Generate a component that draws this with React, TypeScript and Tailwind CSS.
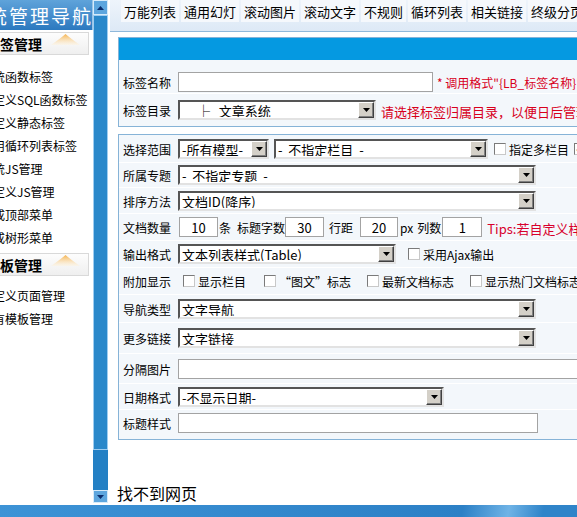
import clsx from 'clsx'

const tabs = ['万能列表', '通用幻灯', '滚动图片', '滚动文字', '不规则', '循环列表', '相关链接', '终级分页']

const tagItems = ['系统函数标签', '自定义SQL函数标签', '自定义静态标签', '通用循环列表标签', '系统JS管理', '自定义JS管理', '生成顶部菜单', '生成树形菜单']
const tplItems = ['自定义页面管理', '所有模板管理']

function Arrow({ up }: { up?: boolean }) {
  return (
    <svg width="7" height="4" viewBox="0 0 7 4">
      <path d={up ? 'M3.5 0L7 4H0z' : 'M0 0h7L3.5 4z'} fill="currentColor" />
    </svg>
  )
}

function Sel({ w, text, className, pad = 'pl-[2px]' }: { w: string; text: string; className?: string; pad?: string }) {
  return (
    <div
      className={clsx(
        'flex h-[20px] shrink-0 items-center border-2 border-t-[#555] border-l-[#555] border-r-[#e2e2e2] border-b-[#e2e2e2] bg-white',
        w,
        className,
      )}
    >
      <span className={clsx('flex-1 overflow-hidden whitespace-pre pt-[1px] text-[13px] leading-none text-black', pad)}>{text}</span>
      <span className="flex h-[16px] w-[16px] items-center justify-center border border-t-white border-l-white border-r-[#404040] border-b-[#404040] bg-[#d4d0c8] text-black shadow-[inset_-1px_-1px_0_#808080]">
        <Arrow />
      </span>
    </div>
  )
}

function Inp({ w, value, className }: { w: string; value?: string; className?: string }) {
  return (
    <div
      className={clsx(
        'flex h-[20px] shrink-0 items-center justify-center border border-[#a3a3a3] bg-white pt-[1px] text-[13px] leading-none text-black',
        w,
        className,
      )}
    >
      {value}
    </div>
  )
}

function Check({ checked, className }: { checked?: boolean; className?: string }) {
  return (
    <span
      className={clsx(
        'flex h-[12px] w-[12px] shrink-0 items-center justify-center border border-t-[#7a7a7a] border-l-[#7a7a7a] border-r-[#c8c8c8] border-b-[#c8c8c8] bg-white text-[10px] leading-none text-black',
        className,
      )}
    >
      {checked ? '✓' : ''}
    </span>
  )
}

function Txt({
  children,
  className,
  color = 'text-black',
  size = 'text-[12px]',
}: {
  children: React.ReactNode
  className?: string
  color?: string
  size?: string
}) {
  return <span className={clsx('whitespace-nowrap pt-[2px] leading-none', size, color, className)}>{children}</span>
}

function Row({ label, h, children, last, extra }: { label: string; h: string; children?: React.ReactNode; last?: boolean; extra?: string }) {
  return (
    <div className={clsx('flex items-center bg-[#f3f7fb] pl-[4px]', h, !last && 'border-b border-white', extra)}>
      <Txt className="w-[55px] shrink-0">{label}</Txt>
      {children}
    </div>
  )
}

function Mound() {
  return (
    <svg width="29" height="11" viewBox="0 0 29 11" className="ml-[9px] mt-[-8px] shrink-0">
      <defs>
        <linearGradient id="mg" x1="0" y1="0" x2="0" y2="1">
          <stop offset="0" stopColor="#f4b24e" />
          <stop offset="1" stopColor="#fff3dc" stopOpacity="0.4" />
        </linearGradient>
      </defs>
      <path d="M0 11 Q10 4 14.5 0 Q19 4 29 11 Z" fill="url(#mg)" />
    </svg>
  )
}

function SectionHead({ title }: { title: string }) {
  return (
    <div className="ml-[-15px] flex h-[23px] w-[104px] items-center border border-[#d9d9d9] bg-gradient-to-b from-[#fdfdfd] to-[#efefef]">
      <span className="whitespace-nowrap text-[14px] font-bold leading-none text-black">{title}</span>
      <Mound />
    </div>
  )
}

function Sidebar() {
  return (
    <div className="flex w-[93px] shrink-0 flex-col overflow-hidden bg-white">
      <div className="flex h-[30px] shrink-0 items-center overflow-hidden border-r border-[#9cc6e8] bg-gradient-to-b from-[#5fa3da] to-[#2b79bf]">
        <span className="ml-[-12px] whitespace-nowrap text-[19px] leading-none tracking-[2px] text-white">统管理导航</span>
      </div>
      <div className="mt-[2px]">
        <SectionHead title="标签管理" />
      </div>
      <div className="mt-[10px]">
        {tagItems.map((t) => (
          <div key={t} className="ml-[-19px] h-[23px] whitespace-nowrap text-[12px] leading-[23px] text-black">
            {t}
          </div>
        ))}
      </div>
      <div className="mt-[4px]">
        <SectionHead title="模板管理" />
      </div>
      <div className="mt-[8px]">
        {tplItems.map((t) => (
          <div key={t} className="ml-[-19px] h-[23px] whitespace-nowrap text-[12px] leading-[23px] text-black">
            {t}
          </div>
        ))}
      </div>
    </div>
  )
}

function Scrollbar() {
  return (
    <div className="mb-[2px] flex w-[15px] shrink-0 flex-col bg-[#2784c7]">
      <div className="flex h-[15px] items-center justify-center border border-[#d6ebfa] bg-[#5da6de] text-[#0b2d6b]">
        <Arrow up />
      </div>
      <div className="h-[435px] border border-[#9fcdf0] bg-[#2a88ca]" />
      <div className="flex-1 bg-[#2480c4]" />
      <div className="flex h-[13px] items-center justify-center border border-[#d6ebfa] bg-[#5da6de] text-[#0b2d6b]">
        <Arrow />
      </div>
    </div>
  )
}

const red = 'text-[#d8001c]'

export default function App() {
  return (
    <div
      className="flex h-[517px] w-[577px] flex-col overflow-hidden bg-white"
      style={{ fontFamily: '"Noto Sans CJK SC", "Noto Sans", sans-serif' }}
    >
      <div className="flex h-[505px]">
        <Sidebar />
        <Scrollbar />
        <div className="ml-[2px] flex min-w-0 flex-1 flex-col overflow-hidden">
          {/* tab bar */}
          <div className="flex h-[32px] shrink-0 gap-[2px] border-b border-[#8fb8da] bg-gradient-to-b from-[#eef4fb] to-[#dde9f6] pl-[11px]">
            {tabs.map((t) => (
              <div
                key={t}
                className="h-[22px] shrink-0 whitespace-nowrap bg-[#f5f8fc] px-[3px] pt-[1px] text-[13px] leading-[22px] text-black"
              >
                {t}
              </div>
            ))}
          </div>

          {/* panel 1 */}
          <div className="ml-[8px] mt-[5px] w-[620px] shrink-0 border border-[#86b3d7] bg-white">
            <div className="h-[22px] bg-[#0599e1]" />
            <Row label="标签名称" h="h-[34px]" extra="pt-[10px]">
              <Inp w="w-[255px]" />
              <Txt className="ml-[4px]" color={red}>
                * 调用格式"{'{'}LB_标签名称{'}'}"
              </Txt>
            </Row>
            <Row label="标签目录" h="h-[32px]" last>
              <Sel w="w-[198px]" text="├   文章系统" pad="pl-[17px]" />
              <Txt className="ml-[5px]" size="text-[13px]" color={red}>
                请选择标签归属目录，以便日后管理标签
              </Txt>
            </Row>
          </div>

          {/* panel 2 */}
          <div className="ml-[8px] mt-[7px] w-[620px] shrink-0 border border-[#86b3d7] bg-white">
            <Row label="选择范围" h="h-[28px]">
              <Sel w="w-[91px]" text="-所有模型-" />
              <Sel w="w-[214px]" text="-  不指定栏目  -" className="ml-[5px]" />
              <Check className="ml-[6px]" />
              <Txt className="ml-[3px]">指定多栏目</Txt>
              <Check checked className="ml-[5px]" />
            </Row>
            <Row label="所属专题" h="h-[25px]">
              <Sel w="w-[358px]" text="-  不指定专题  -" />
            </Row>
            <Row label="排序方法" h="h-[26px]">
              <Sel w="w-[358px]" text="文档ID(降序)" />
            </Row>
            <Row label="文档数量" h="h-[27px]">
              <Inp w="w-[39px]" value="10" className="ml-[1px]" />
              <Txt className="ml-[1px]">条</Txt>
              <Txt className="ml-[6px]">标题字数</Txt>
              <Inp w="w-[39px]" value="30" />
              <Txt className="ml-[5px]">行距</Txt>
              <Inp w="w-[38px]" value="20" className="ml-[7px]" />
              <Txt className="ml-[2px]">px</Txt>
              <Txt className="ml-[4px]">列数</Txt>
              <Inp w="w-[40px]" value="1" className="ml-[1px]" />
              <Txt className="ml-[5px]" size="text-[13px]" color="text-[#d8002c]">
                Tips:若自定义样式，请在下面填写
              </Txt>
            </Row>
            <Row label="输出格式" h="h-[27px]">
              <Sel w="w-[218px]" text="文本列表样式(Table)" />
              <Check className="ml-[12px]" />
              <Txt className="ml-[3px]">采用Ajax输出</Txt>
            </Row>
            <Row label="附加显示" h="h-[27px]">
              <Check className="ml-[5px]" />
              <Txt className="ml-[3px]">显示栏目</Txt>
              <Check className="ml-[18px]" />
              <Txt className="ml-[3px]">“图文”标志</Txt>
              <Check className="ml-[16px]" />
              <Txt className="ml-[3px]">最新文档标志</Txt>
              <Check className="ml-[16px]" />
              <Txt className="ml-[3px]">显示热门文档标志</Txt>
            </Row>
            <Row label="导航类型" h="h-[28px]">
              <Sel w="w-[358px]" text="文字导航" />
            </Row>
            <Row label="更多链接" h="h-[31px]">
              <Sel w="w-[358px]" text="文字链接" />
            </Row>
            <Row label="分隔图片" h="h-[30px]">
              <Inp w="w-[430px]" />
            </Row>
            <Row label="日期格式" h="h-[26px]">
              <Sel w="w-[266px]" text="-不显示日期-" />
            </Row>
            <Row label="标题样式" h="h-[29px]" last extra="pb-[3px]">
              <Inp w="w-[360px]" />
            </Row>
          </div>

          <div className="ml-[7px] mt-[43px] whitespace-nowrap text-[16px] leading-[20px] text-black">找不到网页</div>
        </div>
      </div>
      <div className="h-[12px] shrink-0 bg-[linear-gradient(100deg,#3d93d6_0%,#2c80c6_80%,#6fb3e6_88%,#2f84c9_94%)]" />
    </div>
  )
}
